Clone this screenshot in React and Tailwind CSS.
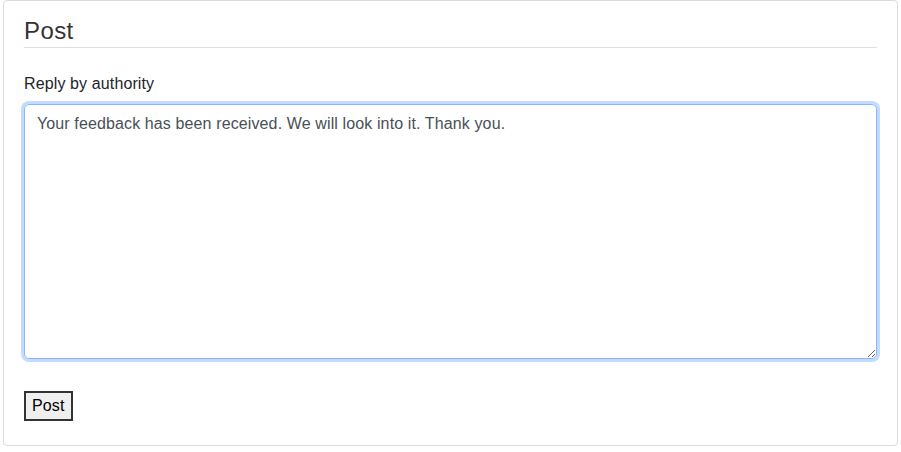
export default function App() {
    return (
        <div className="min-h-[452px] bg-white pl-[3px] pr-[3px] font-['Liberation_Sans',Arial,sans-serif] tracking-[0.12px] text-[#212529]">
            <div className="h-[446px] rounded-[4px] border border-[#dcdcdc] bg-white px-5 pt-[15px]">
                <h2 className="border-b border-[#e0e0e0] pb-[2px] text-2xl leading-[29px] font-normal tracking-[0.4px] text-[#333]">Post</h2>

                <div className="mt-6">
                    <label className="mb-2 block text-base leading-6">Reply by authority</label>
                    <textarea
                        defaultValue="Your feedback has been received. We will look into it. Thank you."
                        className="block h-[255px] w-full rounded-[5px] border border-[#86b7fe] px-3 py-[7px] text-base leading-6 text-[#495057] shadow-[0_0_0_3px_rgba(13,110,253,0.25)] outline-none"
                    />
                </div>

                <button className="mt-8 border-2 border-[#333] bg-[#efefef] px-1.5 text-base leading-[26px] text-black">Post</button>
            </div>
        </div>
    );
}
